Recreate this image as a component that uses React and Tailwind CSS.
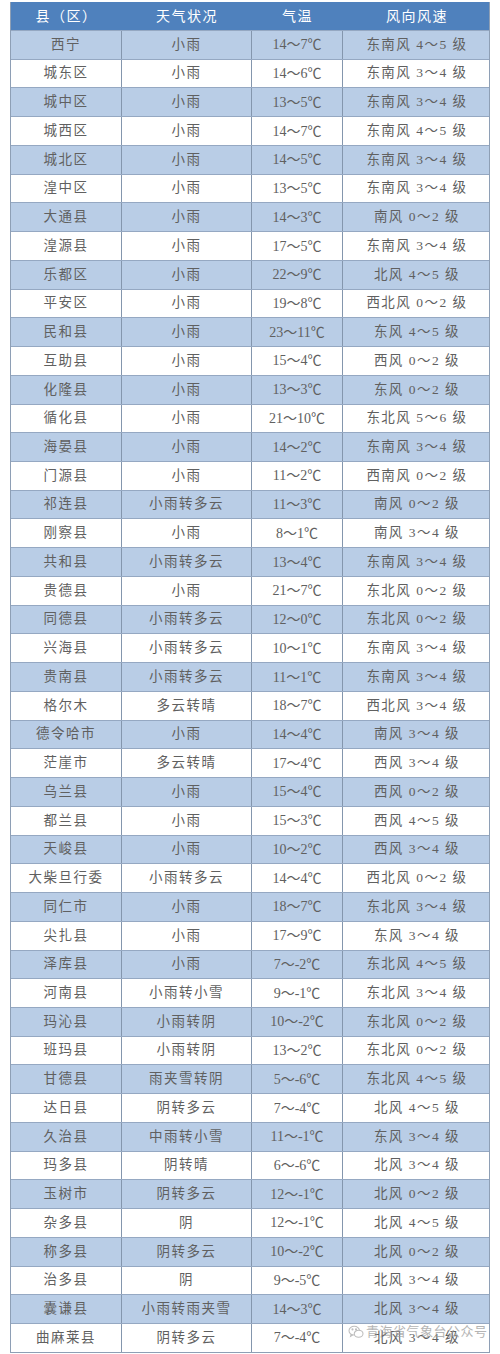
import React from "react";

const rows = [
  ["西宁", "小雨", "14～7℃", "东南风 4～5 级"],
  ["城东区", "小雨", "14～6℃", "东南风 3～4 级"],
  ["城中区", "小雨", "13～5℃", "东南风 3～4 级"],
  ["城西区", "小雨", "14～7℃", "东南风 4～5 级"],
  ["城北区", "小雨", "14～5℃", "东南风 3～4 级"],
  ["湟中区", "小雨", "13～5℃", "东南风 3～4 级"],
  ["大通县", "小雨", "14～3℃", "南风 0～2 级"],
  ["湟源县", "小雨", "17～5℃", "东南风 3～4 级"],
  ["乐都区", "小雨", "22～9℃", "北风 4～5 级"],
  ["平安区", "小雨", "19～8℃", "西北风 0～2 级"],
  ["民和县", "小雨", "23～11℃", "东风 4～5 级"],
  ["互助县", "小雨", "15～4℃", "西风 0～2 级"],
  ["化隆县", "小雨", "13～3℃", "东风 0～2 级"],
  ["循化县", "小雨", "21～10℃", "东北风 5～6 级"],
  ["海晏县", "小雨", "14～2℃", "东南风 3～4 级"],
  ["门源县", "小雨", "11～2℃", "西南风 0～2 级"],
  ["祁连县", "小雨转多云", "11～3℃", "南风 0～2 级"],
  ["刚察县", "小雨", "8～1℃", "南风 3～4 级"],
  ["共和县", "小雨转多云", "13～4℃", "东南风 3～4 级"],
  ["贵德县", "小雨", "21～7℃", "东北风 0～2 级"],
  ["同德县", "小雨转多云", "12～0℃", "东北风 0～2 级"],
  ["兴海县", "小雨转多云", "10～1℃", "东南风 3～4 级"],
  ["贵南县", "小雨转多云", "11～1℃", "东南风 3～4 级"],
  ["格尔木", "多云转晴", "18～7℃", "西北风 3～4 级"],
  ["德令哈市", "小雨", "14～4℃", "南风 3～4 级"],
  ["茫崖市", "多云转晴", "17～4℃", "西风 3～4 级"],
  ["乌兰县", "小雨", "15～4℃", "西风 0～2 级"],
  ["都兰县", "小雨", "15～3℃", "西风 4～5 级"],
  ["天峻县", "小雨", "10～2℃", "西风 3～4 级"],
  ["大柴旦行委", "小雨转多云", "14～4℃", "西北风 0～2 级"],
  ["同仁市", "小雨", "18～7℃", "东北风 3～4 级"],
  ["尖扎县", "小雨", "17～9℃", "东风 3～4 级"],
  ["泽库县", "小雨", "7～-2℃", "东北风 4～5 级"],
  ["河南县", "小雨转小雪", "9～-1℃", "东北风 3～4 级"],
  ["玛沁县", "小雨转阴", "10～-2℃", "东北风 0～2 级"],
  ["班玛县", "小雨转阴", "13～2℃", "东北风 0～2 级"],
  ["甘德县", "雨夹雪转阴", "5～-6℃", "东北风 4～5 级"],
  ["达日县", "阴转多云", "7～-4℃", "北风 4～5 级"],
  ["久治县", "中雨转小雪", "11～-1℃", "东风 3～4 级"],
  ["玛多县", "阴转晴", "6～-6℃", "北风 3～4 级"],
  ["玉树市", "阴转多云", "12～-1℃", "北风 0～2 级"],
  ["杂多县", "阴", "12～-1℃", "北风 4～5 级"],
  ["称多县", "阴转多云", "10～-2℃", "北风 0～2 级"],
  ["治多县", "阴", "9～-5℃", "北风 3～4 级"],
  ["囊谦县", "小雨转雨夹雪", "14～3℃", "北风 3～4 级"],
  ["曲麻莱县", "阴转多云", "7～-4℃", "北风 3～4 级"],
];

function WeChatIcon() {
  return (
    <svg width="16" height="14" viewBox="0 0 18 16" fill="none" stroke="#a8a8a8" strokeWidth="1.2">
      <ellipse cx="7" cy="6.5" rx="6" ry="5" />
      <path d="M3.5 10.5 L2.8 13 L5.5 11.3" />
      <ellipse cx="12" cy="10" rx="5" ry="4" fill="white" />
      <circle cx="5" cy="5" r="0.6" fill="#a8a8a8" />
      <circle cx="9" cy="5" r="0.6" fill="#a8a8a8" />
    </svg>
  );
}

export default function App() {
  return (
    <div
      className="w-[500px] h-[1354px] bg-white relative overflow-hidden"
      style={{ fontFamily: '"Liberation Serif", "Noto Sans CJK SC", serif' }}
    >
      <div className="ml-[10px] mt-[2px] w-[480px] border-l border-r border-b border-[#8e9fb5]">
        <div className="grid grid-cols-[111px_130px_91px_148px] h-[28px] bg-[#4f81bd] text-white text-[14px] tracking-[1.5px] items-center text-center">
          <div>县（区）</div>
          <div>天气状况</div>
          <div>气温</div>
          <div>风向风速</div>
        </div>
        {rows.map((r, i) => (
          <div
            key={i}
            className={
              "grid grid-cols-[111px_130px_91px_148px] h-[28.74px] border-t border-[#95a8c2] text-[13.5px] text-[#606060] tracking-[1.5px] text-center " +
              (i % 2 === 0 ? "bg-[#b9cde6]" : "bg-white")
            }
          >
            <div className="flex items-center justify-center border-r border-[#8496ad]">{r[0]}</div>
            <div className="flex items-center justify-center border-r border-[#8496ad]">{r[1]}</div>
            <div className="flex items-center justify-center border-r border-[#8496ad] tracking-[0px] text-[14px]">{r[2]}</div>
            <div className="flex items-center justify-center">{r[3]}</div>
          </div>
        ))}
      </div>
      <div className="absolute left-[348px] top-[1324px] flex items-center gap-[2px] text-[13px] leading-[16px] text-[#9c9c9c] opacity-75 tracking-[0.5px]">
        <WeChatIcon />
        <span>青海省气象台公众号</span>
      </div>
    </div>
  );
}
